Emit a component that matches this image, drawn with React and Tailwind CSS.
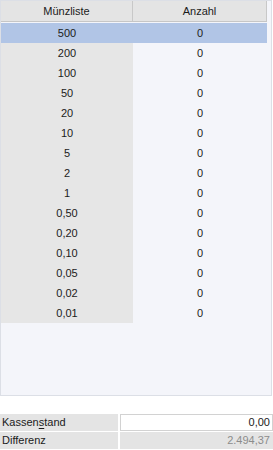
const coins = ["500", "200", "100", "50", "20", "10", "5", "2", "1", "0,50", "0,20", "0,10", "0,05", "0,02", "0,01"]

export default function App() {
  return (
    <div className="w-[273px] h-[450px] bg-white text-[11px] text-[#1b1b1b] font-['Liberation_Sans',Arial,sans-serif] leading-none">
      <div className="w-[272px] h-[396px] border border-[#dcdfe6] bg-[#f4f5fa]">
        <div className="flex w-[266px] h-[21px] bg-[#e4e4e4] border-b border-[#c6c6c6]">
          <div className="w-[132px] flex items-center justify-center border-r border-[#c8c8c8]">Münzliste</div>
          <div className="flex-1 flex items-center justify-center border-r border-[#c8c8c8]">Anzahl</div>
        </div>
        <div className="mt-px">
          {coins.map((c, i) => (
            <CoinRow key={c} coin={c} selected={i === 0} />
          ))}
        </div>
      </div>
      <div className="mt-[18px] flex flex-col gap-px">
        <div className="flex h-[17px] gap-[2px]">
          <div className="w-[118px] bg-[#e4e4e4] flex items-center pl-[2px]">
            Kassen<span className="underline underline-offset-2">s</span>tand
          </div>
          <div className="flex-1 bg-white border border-[#d2d2d2] flex items-center justify-end pr-[2px]">0,00</div>
        </div>
        <div className="flex h-[17px] gap-[2px]">
          <div className="w-[118px] bg-[#e4e4e4] flex items-center pl-[2px]">Differenz</div>
          <div className="flex-1 bg-[#e4e4e4] flex items-center justify-end pr-[3px] text-[#8c8c8c]">2.494,37</div>
        </div>
      </div>
    </div>
  )
}

function CoinRow({ coin, selected }) {
  return (
    <div className={"flex w-[266px] h-5 " + (selected ? "bg-[#b1c5e6]" : "")}>
      <div className={"w-[132px] flex items-center justify-center " + (selected ? "" : "bg-[#e6e6e6]")}>{coin}</div>
      <div className="flex-1 flex items-center justify-center">0</div>
    </div>
  )
}
